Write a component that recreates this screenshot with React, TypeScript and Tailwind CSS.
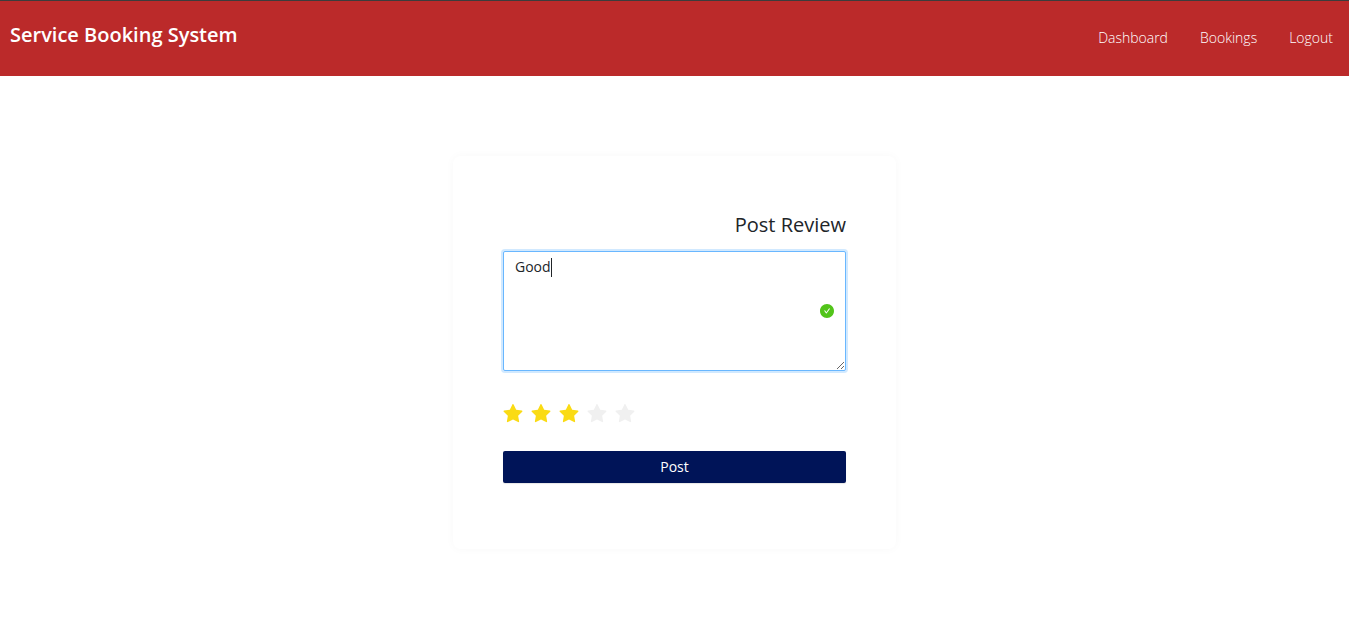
import { useState } from "react";

const links = ["Dashboard", "Bookings", "Logout"];
const starValues = [1, 2, 3, 4, 5];
const initialReview = "Good";

function Star({ value, active, onSelect }: { value: number; active: boolean; onSelect: (value: number) => void }) {
  return (
    <label className={`relative block cursor-pointer ${active ? "text-[#fadb14]" : "text-[#f0f0f0]"}`}>
      <input
        type="radio"
        name="rating"
        value={value}
        checked={active}
        onChange={() => onSelect(value)}
        aria-label={`${value} star`}
        className="absolute inset-0 size-5 cursor-pointer appearance-none"
      />
      <svg viewBox="64 64 896 896" className="size-5" fill="currentColor" aria-hidden="true">
        <path d="M908.1 353.1l-253.9-36.9L540.7 86.1c-3.1-6.3-8.2-11.4-14.5-14.5-15.8-7.8-35-1.3-42.9 14.5L369.8 316.2l-253.9 36.9c-7 1-13.4 4.3-18.3 9.3a32.05 32.05 0 00.6 45.3l183.7 179.1-43.4 252.9a31.95 31.95 0 0046.4 33.7L512 754l227.1 119.4c6.2 3.3 13.4 4.4 20.3 3.2 17.4-3 29.1-19.5 26.1-36.9l-43.4-252.9 183.7-179.1c5-4.9 8.3-11.3 9.3-18.3 2.7-17.5-9.5-33.7-27-36.3z" />
      </svg>
    </label>
  );
}

export default function App() {
  const [review, setReview] = useState(initialReview);
  const [rating, setRating] = useState(3);

  return (
    <div className="min-h-screen bg-white font-['Segoe_UI','Open_Sans',sans-serif] text-sm text-[#212529]">
      <header className="flex items-start justify-between border-t border-[#3c3c3c] bg-[#bb2a2a] pr-4 pb-[25px] pl-2.5 text-white">
        <h1 className="pt-5 text-xl leading-7 font-semibold">Service Booking System</h1>
        <nav className="flex gap-8 pt-6 text-sm leading-[26px] font-light">
          {links.map((link) => (
            <a key={link} href="#">
              {link}
            </a>
          ))}
        </nav>
      </header>

      <main className="flex justify-center px-2.5 pt-20">
        <form
          onSubmit={(event) => event.preventDefault()}
          className="w-1/3 min-w-80 rounded-lg p-[50px] pb-[66px] shadow-[0_0_10px_rgba(0,0,0,0.03)]"
        >
          <h2 className="pt-[3px] text-right text-xl leading-8 font-medium">Post Review</h2>

          <div className="relative mt-2.5 flex">
            <textarea
              aria-label="Review"
              autoFocus
              value={review}
              onChange={(event) => setReview(event.target.value)}
              className="h-[120px] w-full rounded-xs border border-[#69b7ff] bg-white px-[11px] py-1 text-sm leading-[22px] shadow-[0_0_0_2px_rgba(24,144,255,0.2)] outline-none"
            />
            {review === initialReview && (
              <span className="pointer-events-none absolute top-[7px] left-12 h-[19px] w-px bg-[#212529]" aria-hidden="true" />
            )}
            <svg
              viewBox="64 64 896 896"
              className="pointer-events-none absolute top-1/2 right-3 size-3.5 -translate-y-1/2 text-[#52c41a]"
              fill="currentColor"
              aria-hidden="true"
            >
              <path d="M512 64C264.6 64 64 264.6 64 512s200.6 448 448 448 448-200.6 448-448S759.4 64 512 64zm193.5 301.7l-210.6 292a31.8 31.8 0 01-51.7 0L318.5 484.9c-3.8-5.3 0-12.7 6.5-12.7h46.9c10.2 0 19.9 4.9 25.9 13.3l71.2 98.8 157.2-218c6-8.3 15.6-13.3 25.9-13.3H699c6.5 0 10.3 7.4 6.5 12.7z" />
            </svg>
          </div>

          <fieldset aria-label="Rating" className="mt-[33px] flex gap-2">
            {starValues.map((value) => (
              <Star key={value} value={value} active={value <= rating} onSelect={setRating} />
            ))}
          </fieldset>

          <button
            type="submit"
            className="mt-[27px] h-8 w-full cursor-pointer rounded-xs bg-[#001458] text-sm text-white shadow-[0_1px_1px_rgba(0,0,0,0.1)]"
          >
            Post
          </button>
        </form>
      </main>
    </div>
  );
}
